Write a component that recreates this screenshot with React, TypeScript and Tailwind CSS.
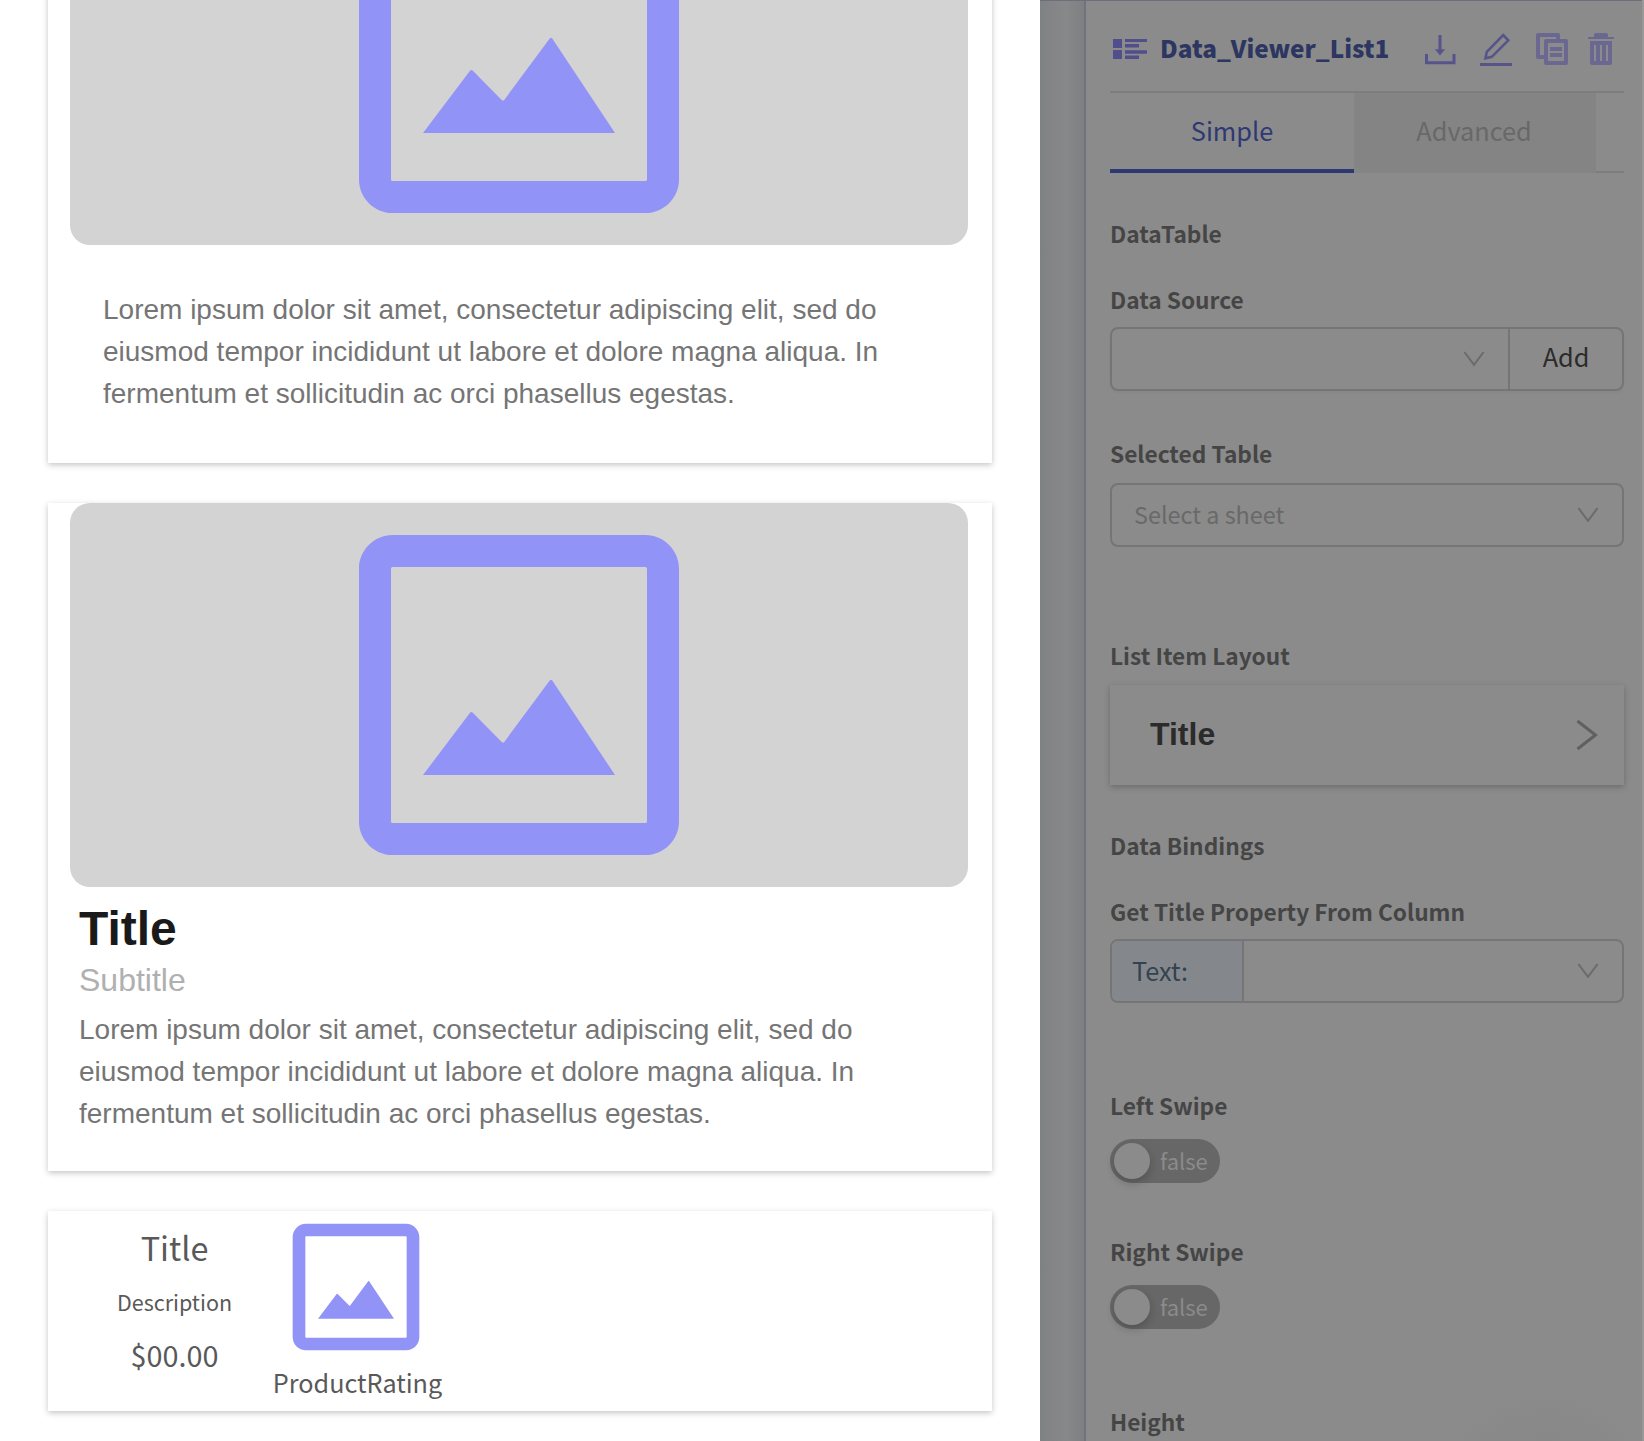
import type { ReactNode } from "react";

const LOREM = [
  "Lorem ipsum dolor sit amet, consectetur adipiscing elit, sed do",
  "eiusmod tempor incididunt ut labore et dolore magna aliqua. In",
  "fermentum et sollicitudin ac orci phasellus egestas.",
];

function PictureIcon({ className }: { className: string }) {
  return (
    <svg viewBox="0 0 24 24" className={className} fill="#9293f7">
      <path
        fillRule="evenodd"
        d="M4.1 2H19.9C21.05 2 22 2.95 22 4.1V19.9C22 21.05 21.05 22 19.9 22H4.1C2.95 22 2 21.05 2 19.9V4.1C2 2.95 2.95 2 4.1 2ZM4.1 4Q4 4 4 4.1V19.9Q4 20 4.1 20H19.9Q20 20 20 19.9V4.1Q20 4 19.9 4Z"
      />
      <path d="M6 17 8.95 13.1Q9.02 13.02 9.1 13.1L10.92 14.93Q11 15 11.08 14.93L13.92 11.1Q14 11 14.08 11.1L18 17Z" />
    </svg>
  );
}

function Card({ className, children }: { className: string; children: ReactNode }) {
  return (
    <div className={`w-[944px] shrink-0 bg-white shadow-[0_2px_6px_rgba(0,0,0,0.23)] ${className}`}>
      {children}
    </div>
  );
}

function Banner() {
  return (
    <div className="ml-[22px] flex h-96 w-[898px] items-center justify-center rounded-[20px] bg-[#d3d3d3] pr-[0.6px]">
      <PictureIcon className="size-96" />
    </div>
  );
}

function Body({ className }: { className: string }) {
  return (
    <div className={`text-[28px] leading-[42px] whitespace-nowrap text-[#757575] ${className}`}>
      {LOREM.map((line) => (
        <p key={line}>{line}</p>
      ))}
    </div>
  );
}

function Label({ className, children }: { className: string; children: ReactNode }) {
  return (
    <div className={`h-[34px] text-[22.7px] leading-[36px] font-bold whitespace-nowrap text-[#454545] ${className}`}>
      {children}
    </div>
  );
}

function Chevron() {
  return (
    <svg viewBox="0 0 22 16" className="h-4 w-[22px]" fill="none" stroke="#6b6b6b" strokeWidth="2">
      <path d="M1.4 1 11 13.8 20.6 1" />
    </svg>
  );
}

function Toggle({ className }: { className: string }) {
  return (
    <div className={`flex h-11 w-[110px] items-center rounded-full bg-[#676767] pl-1 ${className}`}>
      <div className="size-9 rounded-full bg-[#8b8b8b] shadow-[0_4px_8px_rgba(0,20,11,0.22)]" />
      <span className="ml-2.5 pb-[3px] text-[22px] leading-[34px] text-[#8b8b8b]">false</span>
    </div>
  );
}

function Toolbar() {
  return (
    <div className="flex h-[91px] items-start">
      <svg viewBox="0 0 34 20" className="mt-[38px] ml-[3px] h-5 w-[34px]" fill="#504f8c">
        <path d="M0 0h9v9H0zM0 11h9v9H0zM12 0h22v3H12zM12 5h14v3.4H12zM12 11.3h22v3.4H12zM12 16.6h14V20H12z" />
      </svg>
      <span className="mt-[28px] ml-[13px] w-[265px] text-[24.3px] leading-[38px] font-black text-[#2c3661]">
        Data_Viewer_List1
      </span>
      <svg viewBox="0 0 32 32" className="mt-[33px] ml-[-1px] size-8" fill="none" stroke="#56548b" strokeWidth="3">
        <path d="M2.5 20V28.7H30V20" />
        <path d="M16 1V17" />
        <path d="M11 15.3H21L16 21.5Z" fill="#56548b" stroke="none" />
      </svg>
      <svg viewBox="0 0 34 34" className="mt-[32px] ml-[23px] size-[34px]" fill="none" stroke="#56548b" strokeWidth="2.6">
        <path d="M1 31.5H33" strokeWidth="3" />
        <path d="M6.5 25.2 7.8 18.8 24.2 2.2 29.3 7.3 12.8 23.8Z" />
      </svg>
      <svg viewBox="0 0 32 32" className="mt-8 ml-[23px] size-8" fill="none" stroke="#6a6890" strokeWidth="4">
        <path d="M8 24H2V2H22V6" strokeLinejoin="round" />
        <rect x="10" y="8" width="20" height="22" strokeLinejoin="round" />
        <path d="M14 16H26M14 22H26" />
      </svg>
      <svg viewBox="0 0 26 32" className="mt-8 ml-5 h-8 w-[26px]" fill="#6a6890">
        <path d="M6 4V2Q6 0 8 0H18Q20 0 20 2V4H26V6H0V4Z" />
        <path
          fillRule="evenodd"
          d="M2 8H24V30Q24 32 22 32H4Q2 32 2 30ZM6 12V28H8V12ZM12 12V28H14V12ZM18 12V28H20V12Z"
        />
      </svg>
    </div>
  );
}

export default function App() {
  return (
    <div className="flex h-[1441px] w-[1644px] overflow-hidden bg-white font-['Liberation_Sans',sans-serif]">
      <main className="flex w-[1040px] shrink-0 flex-col pl-12">
        <Card className="mt-[-139px] h-[602px]">
          <Banner />
          <Body className="pt-[44px] pl-[55px]" />
        </Card>

        <Card className="mt-10 h-[668px]">
          <Banner />
          <div className="pl-[31px]">
            <h2 className="mt-[14px] text-[48px] leading-[56px] font-bold text-[#1a1a1a]">Title</h2>
            <p className="mt-px text-[32px] leading-[44px] text-[#b0b0b0]">Subtitle</p>
            <Body className="mt-[7px]" />
          </div>
        </Card>

        <Card className="mt-10 flex h-[200px] pl-[50px] font-['Noto_Sans_CJK_SC',sans-serif] text-[#595959]">
          <div className="flex w-[153px] flex-col items-center pt-3">
            <span className="h-12 text-[32.4px] leading-[48px]">Title</span>
            <span className="mt-[15px] h-8 text-[21.5px] leading-8">Description</span>
            <span className="mt-4 h-[42px] text-[28.8px] leading-[42px]">$00.00</span>
          </div>
          <div className="ml-5 flex w-[170px] flex-col items-center">
            <PictureIcon className="size-[152px]" />
            <span className="h-[38px] pl-[3px] text-[25.2px] leading-[38px] whitespace-nowrap">ProductRating</span>
          </div>
        </Card>
      </main>

      <aside className="flex w-[602px] shrink-0 border-t border-[#6b6f7c] bg-[#8b8b8b]">
        <div className="w-11 shrink-0 bg-linear-to-r from-[#7f8284] via-[#878889] via-60% to-[#7e7f80]" />
        <section className="w-[558px] shrink-0 border-l-2 border-[#6d7380] bg-[radial-gradient(circle_at_460px_1500px,#858585_0,#8b8b8b_115px)] pr-[18px] pl-6 font-['Noto_Sans_CJK_SC',sans-serif]">
          <div className="w-[514px]">
            <Toolbar />
            <div className="-mt-px flex h-[82px] border-t-2 border-[#7d7d7d] text-[25.3px]">
              <div className="flex w-[244px] justify-center border-b-4 border-[#2e3974] pt-[18px] leading-[38px] text-[#2e3974]">
                Simple
              </div>
              <div className="flex w-[242px] justify-center bg-[#848484] pt-[18px] pr-[2px] leading-[38px] text-[#686868]">
                Advanced
              </div>
              <div className="flex-1 border-b-2 border-[#7d7d7d]" />
            </div>

            <Label className="mt-[43px]">DataTable</Label>

            <Label className="mt-8">Data Source</Label>
            <div className="mt-[11px] flex h-16 rounded-lg border-2 border-[#757575] shadow-[0_2px_2px_rgba(0,0,0,0.03)]">
              <div className="flex w-[396px] items-center justify-end pr-[23px]">
                <Chevron />
              </div>
              <div className="flex flex-1 items-center justify-center border-l-2 border-[#757575] pb-[6px] text-[25.3px] leading-[38px] text-[#2b2b2b]">
                Add
              </div>
            </div>

            <Label className="mt-[45px]">Selected Table</Label>
            <div className="mt-[13px] flex h-16 items-center justify-between rounded-lg border-2 border-[#757575] pr-[23px] pl-[22px]">
              <span className="pb-[3px] text-[23.4px] leading-[38px] text-[#696969]">Select a sheet</span>
              <Chevron />
            </div>

            <Label className="mt-[91px]">List Item Layout</Label>
            <div className="mt-[13px] flex h-[100px] items-center justify-between pr-[26px] pl-10 shadow-[0_2px_6px_rgba(0,0,0,0.23)]">
              <span className="pb-[3px] font-['Liberation_Sans',sans-serif] text-[32px] leading-[40px] font-bold text-[#2b2b2b]">
                Title
              </span>
              <svg viewBox="0 0 22 32" className="h-8 w-[22px]" fill="none" stroke="#606060" strokeWidth="3">
                <path d="M1.5 2 19.5 16 1.5 30" />
              </svg>
            </div>

            <Label className="mt-[43px]">Data Bindings</Label>

            <Label className="mt-8">Get Title Property From Column</Label>
            <div className="mt-[11px] flex h-16 overflow-hidden rounded-lg border-2 border-[#757575]">
              <div className="flex w-[132px] items-center border-r-2 border-[#757575] bg-[#84888c] pb-0.5 pl-5 text-[25.3px] leading-[38px] text-[#33434f]">
                Text:
              </div>
              <div className="flex flex-1 items-center justify-end pr-[23px]">
                <Chevron />
              </div>
            </div>

            <Label className="mt-[85px]">Left Swipe</Label>
            <Toggle className="mt-[17px]" />

            <Label className="mt-[51px]">Right Swipe</Label>
            <Toggle className="mt-[17px]" />

            <Label className="mt-[75px]">Height</Label>
          </div>
        </section>
      </aside>
      <div className="flex-1 bg-[#989898]" />
    </div>
  );
}
